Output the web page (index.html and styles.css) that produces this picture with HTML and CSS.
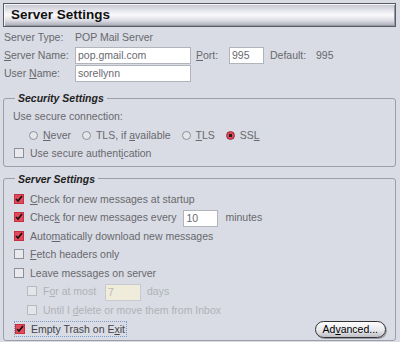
FILE: index.html
```html
<!DOCTYPE html>
<html lang="en">

<head>
    <meta charset="UTF-8">
    <title>Server Settings</title>
    <link rel="stylesheet" href="styles.css">
</head>

<body>
    <div class="header">Server Settings</div>

    <div class="info">
        <div class="row">
            <span class="label">Server Type:</span>
            <span>POP Mail Server</span>
        </div>
        <div class="row">
            <span class="label"><u>S</u>erver Name:</span>
            <input class="text name" type="text" value="pop.gmail.com">
            <span class="port"><u>P</u>ort:</span>
            <input class="text portbox" type="text" value="995">
            <span class="default">Default:</span>
            <span>995</span>
        </div>
        <div class="row">
            <span class="label">User <u>N</u>ame:</span>
            <input class="text name" type="text" value="sorellynn">
        </div>
    </div>

    <fieldset class="group security">
        <legend>Security Settings</legend>
        <div class="line">Use secure connection:</div>
        <div class="line radios">
            <span class="radio"><i class="dot"></i><u>N</u>ever</span>
            <span class="radio"><i class="dot"></i>TLS, if <u>a</u>vailable</span>
            <span class="radio"><i class="dot"></i><u>T</u>LS</span>
            <span class="radio"><i class="dot on"></i>SS<u>L</u></span>
        </div>
        <div class="line"><i class="box"></i>Use secure authent<u>i</u>cation</div>
    </fieldset>

    <fieldset class="group server">
        <legend>Server Settings</legend>
        <div class="line"><i class="box on"></i><u>C</u>heck for new messages at startup</div>
        <div class="line"><i class="box on"></i>Chec<u>k</u> for new messages every
            <input class="text minutes" type="text" value="10">minutes</div>
        <div class="line"><i class="box on"></i>Auto<u>m</u>atically download new messages</div>
        <div class="line"><i class="box"></i><u>F</u>etch headers only</div>
        <div class="line"><i class="box"></i>Leave messages on server</div>
        <div class="line sub off"><i class="box"></i>F<u>o</u>r at most
            <input class="text days" type="text" value="7" disabled>days</div>
        <div class="line sub off"><i class="box"></i>Until I <u>d</u>elete or move them from Inbox</div>
        <div class="line last">
            <span class="focus"><i class="box on"></i>Empty Trash on E<u>x</u>it</span>
            <button class="advanced">Ad<u>v</u>anced...</button>
        </div>
    </fieldset>
</body>

</html>
```
FILE: styles.css
```css
body {
    margin: 0;
    padding: 3px 4px 0 3px;
    background-color: #d9dce4;
    font-family: 'Liberation Sans', Arial, sans-serif;
    font-size: 10.5px;
    color: #68686e;
}

u {
    text-decoration: underline;
    text-underline-offset: 1px;
}

.header {
    height: 22px;
    line-height: 22px;
    padding-left: 7px;
    border: 1px solid #5a5a62;
    box-shadow: inset 1px 1px 0 #f6f6fa, inset -1px -1px 0 #9a9aa6;
    background: linear-gradient(to bottom, #c2c2cc 0%, #e6e6ee 30%, #fafafc 50%, #dcdce4 75%, #a8a8b6 100%);
    font-size: 13.5px;
    font-weight: bold;
    color: #111;
}

.info {
    margin-top: 1px;
    padding-left: 1px;
}

.row {
    display: flex;
    align-items: center;
    height: 18px;
}

.label {
    width: 71px;
}

.text {
    height: 17px;
    box-sizing: border-box;
    border: 1px solid #b2b4bc;
    background: #fff;
    padding: 0 2px;
    font-family: inherit;
    font-size: 10.5px;
    color: #6a6a70;
    vertical-align: middle;
}

.name {
    width: 116px;
}

.port {
    margin-left: 5px;
    width: 33px;
}

.portbox {
    width: 35px;
}

.default {
    margin-left: 6px;
    width: 46px;
}

.group {
    margin: 0;
    border: 1px solid #9c9ea8;
    border-radius: 3px;
    padding: 0 8px 0 9px;
}

.group legend {
    padding: 0 3px;
    margin-left: 2px;
    font-style: italic;
    font-weight: bold;
    color: #222;
}

.security {
    margin-top: 10px;
    padding-top: 3px;
    padding-bottom: 3px;
}

.server {
    margin-top: 6px;
    padding-top: 5px;
    padding-bottom: 1px;
}

.line {
    height: 18.5px;
    line-height: 18.5px;
    white-space: nowrap;
}

.radios {
    padding-left: 16px;
}

.radio {
    margin-right: 8px;
}

.dot {
    display: inline-block;
    vertical-align: -1px;
    width: 7px;
    height: 7px;
    border: 1px solid #8e9098;
    border-radius: 50%;
    background: #e4e6ea;
    margin-right: 5px;
}

.dot.on {
    background: radial-gradient(circle, #222 0 1.5px, #e0485a 2px);
    border-color: #9a2a36;
}

.box {
    display: inline-block;
    vertical-align: -1px;
    width: 8px;
    height: 8px;
    border: 1px solid #8e9098;
    background: linear-gradient(to bottom, #e8eaee 0 45%, #8e9098 45% 55%, #e8eaee 55%);
    margin-right: 6px;
    margin-left: 1px;
}

.box.on {
    border-color: #c43040;
    background: #e24a5c url("data:image/svg+xml,%3Csvg xmlns='http://www.w3.org/2000/svg' viewBox='0 0 8 8'%3E%3Cpath d='M1 4l2 2 4-5' fill='none' stroke='%23111' stroke-width='1.6'/%3E%3C/svg%3E") center/8px no-repeat;
}

.minutes {
    width: 35px;
    margin: 0 7px 0 4px;
}

.sub {
    padding-left: 13px;
}

.off {
    color: #b0b2b8;
}

.off .box {
    border-color: #b8bac0;
    background: linear-gradient(to bottom, #e4e6ea 0 45%, #c2c4ca 45% 55%, #e4e6ea 55%);
}

.days {
    width: 36px;
    margin: 0 6px 0 6px;
    background: #efecdc;
    border-color: #c8cad0;
    color: #b8b8b0;
}

.last {
    display: flex;
    align-items: center;
    justify-content: space-between;
    height: 20px;
}

.focus {
    margin-left: 2px;
    outline: 1px dotted #7c9cc8;
    outline-offset: 0;
    line-height: 14px;
    padding-right: 1px;
    color: #444448;
}

.focus .box {
    margin-left: 0;
}

.advanced {
    height: 17px;
    padding: 0 7px;
    margin-right: 1px;
    border: 1px solid #333;
    border-radius: 9px;
    background: linear-gradient(to bottom, #fdfdfd 0%, #e6e6ea 60%, #bcbcc4 100%);
    box-shadow: 1px 1px 0 #9a9aa4;
    font-family: inherit;
    font-size: 10.5px;
    color: #000;
}
```
